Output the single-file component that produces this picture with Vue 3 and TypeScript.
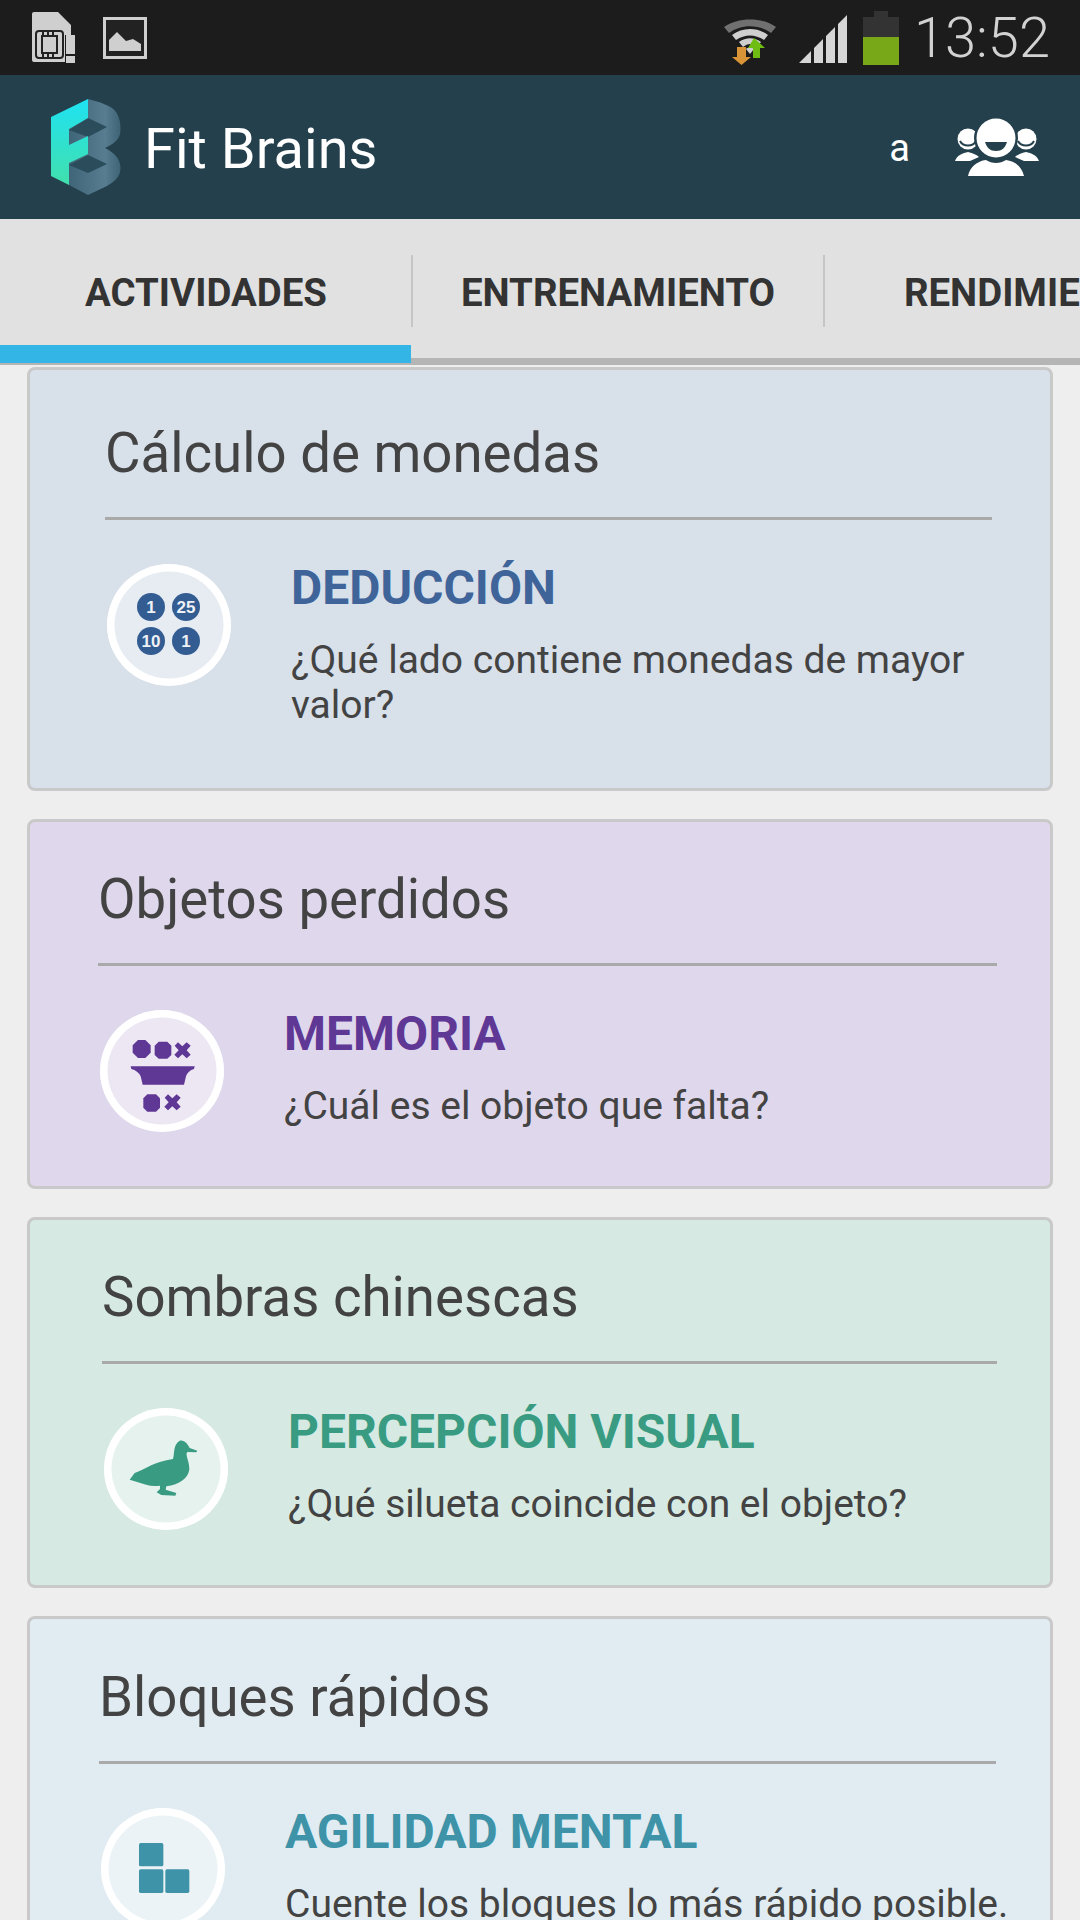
<template>
  <div class="screen">
    <div class="status-bar">
      <svg class="sim-icon" width="44" height="52" viewBox="0 0 44 52">
        <path d="M2 0H26L39 13V23H33V50H2a2 2 0 0 1-2-2V2a2 2 0 0 1 2-2Z" fill="#cfcfcf" />
        <rect x="4" y="19" width="27" height="27" rx="3" fill="none" stroke="#222" stroke-width="2" />
        <rect x="10" y="24" width="15" height="17" fill="none" stroke="#222" stroke-width="2" />
        <path d="M11 19v5M16 19v5M21 19v5M11 41v5M16 41v5M21 41v5" stroke="#222" stroke-width="2" />
        <rect x="34" y="23" width="9" height="19" fill="#cfcfcf" />
        <rect x="34" y="44" width="9" height="7" fill="#cfcfcf" />
      </svg>
      <svg class="image-icon" width="46" height="44" viewBox="0 0 46 44">
        <rect x="1" y="1" width="44" height="42" fill="#cfcfcf" />
        <rect x="4" y="4" width="38" height="36" fill="#222" />
        <path d="M7 35V24L15 16L24 25L31 23L39 28V35Z" fill="#cfcfcf" />
      </svg>
      <div class="status-right">
        <svg class="wifi-icon" width="54" height="54" viewBox="0 0 54 54">
          <path d="M1 16C15 6 39 6 53 16L48 22C36 13 18 13 6 22Z" fill="#707070" />
          <path d="M9 24C19 16 35 16 45 24L41 29C32 23 22 23 13 29Z" fill="#cfcfcf" />
          <path d="M16 31C23 26 31 26 38 31L34 36C29 32 25 32 20 36Z" fill="#cfcfcf" />
          <path d="M23 38C25 36 29 36 31 38L27 43Z" fill="#cfcfcf" />
          <path d="M14 36H23V46H28L18.500 54L9 46H14Z" fill="#d99438" />
          <path d="M30 30L41 40H36V50H29V40H24Z" fill="#6fbd12" transform="translate(1 -3)" />
        </svg>
        <svg class="signal-icon" width="48" height="48" viewBox="0 0 48 48">
          <path d="M0 48L12 36V48ZM15 33L24 24V48H15ZM27 21L36 12V48H27ZM39 9L48 0V48H39Z" fill="#d6d6d6" />
        </svg>
        <div class="battery">
          <span class="battery-tip"></span>
          <span class="battery-body"><span class="battery-level"></span></span>
        </div>
        <span class="clock">13:52</span>
      </div>
    </div>

    <header class="app-bar">
      <svg class="logo" width="75" height="98" viewBox="0 0 75 98">
        <defs>
          <linearGradient id="logoF" x1="0" y1="0" x2="0" y2="1">
            <stop offset="0" stop-color="#1fe2f2" />
            <stop offset="1" stop-color="#41e0ac" />
          </linearGradient>
          <linearGradient id="logoB" x1="0" y1="0" x2="1" y2="0">
            <stop offset="0" stop-color="#3f6579" />
            <stop offset="0.7" stop-color="#587c90" />
            <stop offset="1" stop-color="#3f6476" />
          </linearGradient>
        </defs>
        <path d="M40 1C52 4 64 8 68 14C72 20 72.500 26 72.500 32C72.500 42 65 46 57 50C65 54 72.500 60 72.500 70C72.500 80 65 84 59 88L40 97L21 87V30L40 20Z" fill="url(#logoB)" />
        <path d="M21 32L40 20L59 29L40 39Z" fill="#2b4c5b" />
        <path d="M21 67L40 57L59 66L40 75Z" fill="#2b4c5b" />
        <path d="M40 1V20L21 31V47L40 38V56L21 65V87L3 78V19Z" fill="url(#logoF)" />
      </svg>
      <span class="app-title">Fit Brains</span>
      <span class="app-letter">a</span>
      <svg class="people-icon" width="84" height="60" viewBox="0 0 84 60">
        <circle cx="13" cy="22" r="10.500" fill="#fff" />
        <circle cx="71" cy="22" r="10.500" fill="#fff" />
        <path d="M5 24C8 30 18 30 21 24" fill="none" stroke="#23404c" stroke-width="2" />
        <path d="M63 24C66 30 76 30 79 24" fill="none" stroke="#23404c" stroke-width="2" />
        <path d="M0 44C2 38 8 36 13 35C18 36 22 38 24 40L15 44ZM84 44C82 38 76 36 71 35C66 36 62 38 60 40L69 44Z" fill="#fff" />
        <circle cx="41" cy="21" r="22" fill="#23404c" />
        <circle cx="41" cy="21" r="19.500" fill="#fff" />
        <path d="M30 25H52C50 31 47 34 41 34C35 34 32 31 30 25Z" fill="#23404c" />
        <path d="M13 59C15 50 22 44 31 43C37 47 45 47 51 43C60 44 67 50 69 59Z" fill="#fff" />
      </svg>
    </header>

    <nav class="tabs">
      <div v-for="(tab, i) in tabs" :key="tab" :class="['tab', { active: i === 0 }]">{{ tab }}</div>
    </nav>

    <main class="cards">
      <section
        v-for="card in cards"
        :key="card.title"
        :class="['card', card.kind]"
        :style="{ paddingTop: card.top + 'px', paddingLeft: card.left + 'px', paddingRight: card.right + 'px', paddingBottom: card.bottom + 'px' }"
      >
        <h2 class="card-title">{{ card.title }}</h2>
        <div class="card-body">
          <div class="badge">
            <svg v-if="card.kind === 'coins'" width="124" height="122" viewBox="0 1 124 122">
              <g v-for="coin in coins" :key="coin.x + '-' + coin.y">
                <circle :cx="coin.x" :cy="coin.y" r="14" fill="#335d92" />
                <text :x="coin.x" :y="coin.y + 6" class="coin-text" text-anchor="middle">{{ coin.label }}</text>
              </g>
            </svg>
            <svg v-else-if="card.kind === 'objects'" width="124" height="122" viewBox="58 63 372 366" fill="#5f3795">
              <path d="M172 153H194L210 169V191L194 207H172L156 191V169Z" />
              <path d="M234 158H260L272 170V198L260 209H234L222 198V170Z" />
              <path d="M282 170L292 160L305 172L318 160L330 170L318 184L330 197L318 208L305 196L292 208L281 197L294 184Z" />
              <path d="M150 232H342L340 240Q322 245 316 262L310 287H186L180 262Q172 245 152 240Z" />
              <path d="M200 316H226L238 328V356L226 368H200L188 356V328Z" />
              <path d="M252 326L262 316L275 328L288 316L300 326L288 340L300 353L288 364L275 352L262 364L251 353L264 340Z" />
            </svg>
            <svg v-else-if="card.kind === 'shadow'" width="124" height="122" viewBox="68 55 372 366" fill="#399c82">
              <path d="M145 270L160 250C190 240 220 215 275 208C280 190 275 165 295 153C310 150 320 165 325 175L348 183L345 188L318 187C310 195 325 215 324 240C320 265 295 285 255 290L253 300L285 310L282 318L240 316L226 308L236 298L236 288C210 292 190 285 170 278Z" />
            </svg>
            <svg v-else width="124" height="122" viewBox="62 61 372 366" fill="#3e93a8">
              <rect x="176" y="166" width="73" height="70" rx="5" />
              <rect x="176" y="245" width="73" height="71" rx="5" />
              <rect x="255" y="245" width="72" height="71" rx="5" />
            </svg>
          </div>
          <div class="card-text">
            <h3 class="card-subject">{{ card.subject }}</h3>
            <p class="card-desc">{{ card.desc }}</p>
          </div>
        </div>
      </section>
    </main>
  </div>
</template>

<script setup lang="ts">
interface Card {
  kind: 'coins' | 'objects' | 'shadow' | 'blocks';
  title: string;
  subject: string;
  desc: string;
  top: number;
  left: number;
  right: number;
  bottom: number;
}

const tabs = ['ACTIVIDADES', 'ENTRENAMIENTO', 'RENDIMIENTO'];

const coins = [
  { x: 44, y: 44, label: '1' },
  { x: 79, y: 44, label: '25' },
  { x: 44, y: 78, label: '10' },
  { x: 79, y: 78, label: '1' }
];

// the cards sit a few pixels apart from each other in the reference, so the insets live with the data
const cards: Card[] = [
  { kind: 'coins', title: 'Cálculo de monedas', subject: 'DEDUCCIÓN', desc: '¿Qué lado contiene monedas de mayor valor?', top: 55, left: 75, right: 58, bottom: 60 },
  { kind: 'objects', title: 'Objetos perdidos', subject: 'MEMORIA', desc: '¿Cuál es el objeto que falta?', top: 49, left: 68, right: 53, bottom: 54 },
  { kind: 'shadow', title: 'Sombras chinescas', subject: 'PERCEPCIÓN VISUAL', desc: '¿Qué silueta coincide con el objeto?', top: 49, left: 72, right: 53, bottom: 55 },
  { kind: 'blocks', title: 'Bloques rápidos', subject: 'AGILIDAD MENTAL', desc: 'Cuente los bloques lo más rápido posible.', top: 50, left: 69, right: 54, bottom: 60 }
];
</script>

<style>
html,
body {
  margin: 0;
  background: #eeeeee;
}
</style>

<style scoped>
.screen {
  width: 1080px;
  height: 1920px;
  overflow: hidden;
  background: #eeeeee;
  font-family: Roboto, sans-serif;
}

.status-bar {
  height: 75px;
  box-sizing: border-box;
  display: flex;
  align-items: center;
  padding: 0 30px 0 32px;
  background: #1c1c1c;
}

.image-icon {
  margin-left: 26px;
}

.status-right {
  margin-left: auto;
  display: flex;
  align-items: center;
}

.signal-icon {
  margin-left: 22px;
  margin-top: 3px;
}

.battery {
  margin-left: 16px;
  width: 36px;
  height: 54px;
  display: flex;
  flex-direction: column;
  align-items: center;
}

.battery-tip {
  width: 14px;
  height: 6px;
  background: #333333;
}

.battery-body {
  flex: 1;
  width: 100%;
  display: flex;
  align-items: flex-end;
  background: #333333;
}

.battery-level {
  width: 100%;
  height: 28px;
  background: #78a818;
}

.clock {
  margin-left: 15px;
  font-size: 56px;
  font-weight: 300;
  color: #d2d2d2;
  line-height: 1;
}

.app-bar {
  height: 144px;
  box-sizing: border-box;
  display: flex;
  align-items: center;
  padding: 0 41px 0 48px;
  background: #23404c;
}

.app-title {
  margin-left: 21px;
  padding-top: 4px;
  font-size: 56px;
  color: #ffffff;
}

.app-letter {
  margin-left: auto;
  margin-right: 45px;
  padding-top: 2px;
  font-size: 38px;
  color: #ffffff;
}

.tabs {
  position: relative;
  height: 146px;
  box-sizing: border-box;
  display: flex;
  overflow: hidden;
  background: #e1e1e1;
  box-shadow: inset 0 -7px 0 #b5b5b5;
}

.tab {
  position: relative;
  flex: 0 0 412px;
  height: 126px;
  line-height: 148px;
  text-align: center;
  white-space: nowrap;
  font-size: 38.400px;
  font-weight: 700;
  color: #333333;
}

.tab::before {
  content: '';
  position: absolute;
  left: -1px;
  top: 36px;
  height: 72px;
  width: 2px;
  background: #c6c6c6;
}

.tab:first-child::before {
  display: none;
}

.tab.active::after {
  content: '';
  position: absolute;
  left: 0;
  right: 1px;
  top: 126px;
  height: 18px;
  background: #33b5e5;
}

.cards {
  display: flex;
  flex-direction: column;
  gap: 28px;
  padding: 2px 27px 0;
}

.card {
  box-sizing: border-box;
  border: 3px solid #c9c9c9;
  border-radius: 8px;
}

.coins {
  background: #d8e0ea;
}

.objects {
  background: #dfd7ec;
}

.shadow {
  background: #d6eae3;
}

.blocks {
  background: #e0ecf1;
}

.card-title {
  margin: 0;
  padding-bottom: 36px;
  font-size: 54.600px;
  line-height: 56px;
  font-weight: 400;
  color: #434343;
  border-bottom: 3px solid #a9a9a9;
}

/* the description runs a little past the title rule, as on the last card */
.card-body {
  display: flex;
  align-items: flex-start;
  margin-right: -24px;
  padding-top: 44px;
}

.badge {
  flex: none;
  width: 124px;
  height: 122px;
  box-sizing: border-box;
  margin-left: 2px;
  border-radius: 50%;
  background: rgba(255, 255, 255, 0.4);
  box-shadow: inset 0 0 0 7.500px #ffffff;
}

.badge svg {
  display: block;
}

.coin-text {
  font-family: 'Liberation Sans', sans-serif;
  font-size: 17px;
  font-weight: 700;
  fill: #eef1f6;
}

.card-text {
  margin-left: 60px;
  min-width: 0;
}

.card-subject {
  margin: -1px 0 0;
  font-size: 48px;
  line-height: 50px;
  font-weight: 700;
}

.coins .card-subject {
  color: #3f6499;
}

.objects .card-subject {
  color: #5f3795;
}

.shadow .card-subject {
  color: #399c82;
}

.blocks .card-subject {
  color: #3e93a8;
}

.card-desc {
  margin: 25px 0 0;
  font-size: 39px;
  line-height: 45px;
  color: #434343;
}
</style>
